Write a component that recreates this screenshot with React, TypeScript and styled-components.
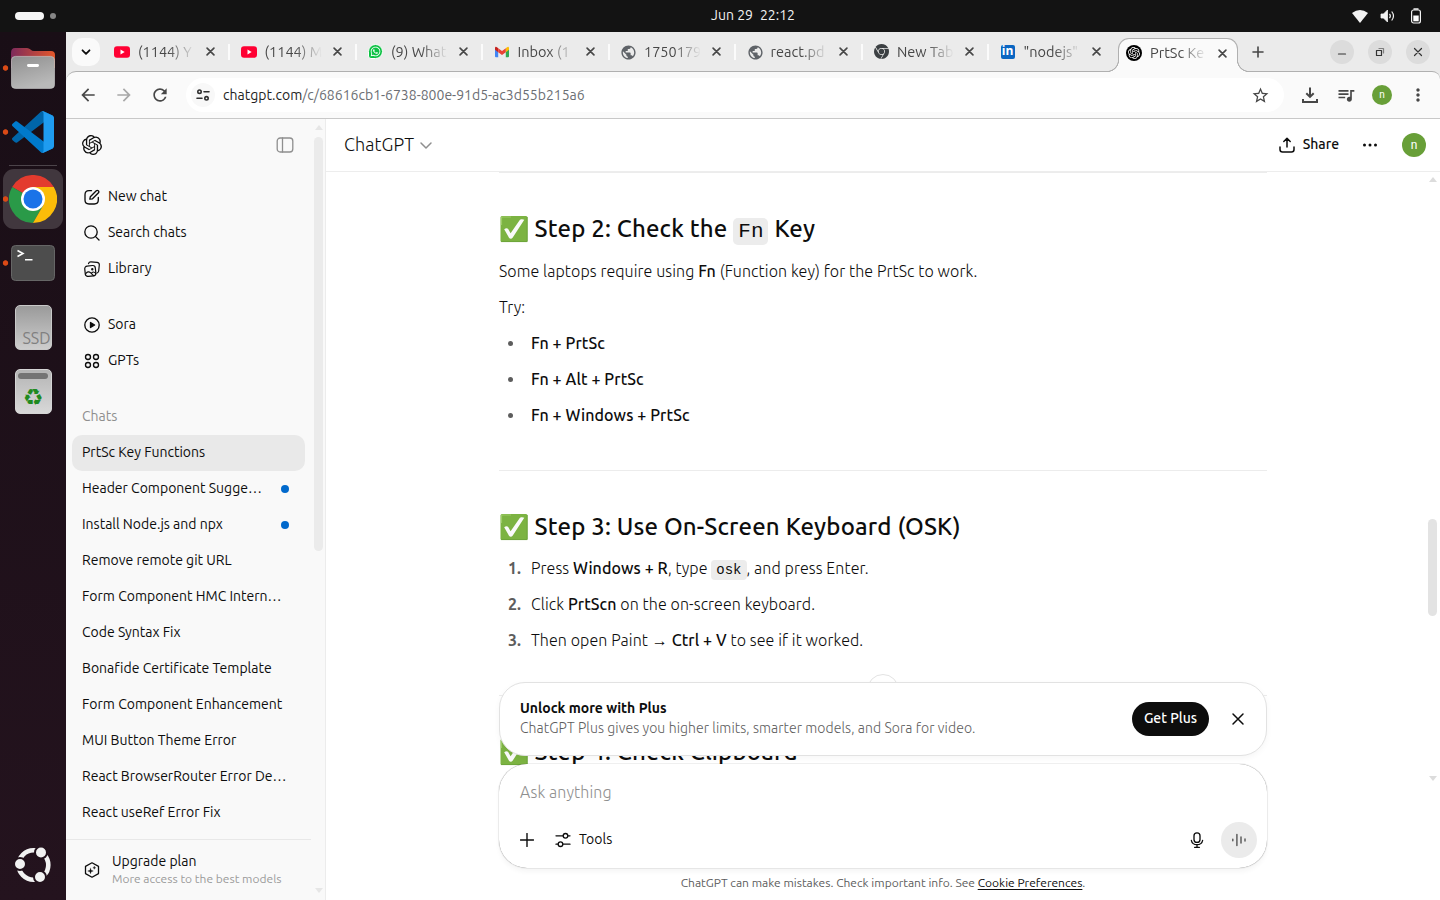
import React from "react";
import styled, { createGlobalStyle, css } from "styled-components";
import {
  MdArrowBack, MdArrowForward, MdRefresh, MdStarBorder, MdQueueMusic, MdMoreVert, MdPublic,
} from "react-icons/md";
import { SiOpenai, SiGooglechrome } from "react-icons/si";
import { FaWhatsapp } from "react-icons/fa";

const Global = createGlobalStyle`
  * { box-sizing: border-box; }
  body {
    margin: 0;
    overflow: hidden;
    font-family: Ubuntu, "Open Sans", "Noto Sans", sans-serif;
    font-variant-ligatures: none;
    font-size: 14px;
    color: #0d0d0d;
  }
  svg { display: block; flex: none; }
`;

/* ---------- text ---------- */

const Label = styled.span<{ $size?: number; $weight?: number; $color?: string; $track?: number; $lift?: number }>`
  font-size: ${(p) => p.$size ?? 14}px;
  font-weight: ${(p) => p.$weight ?? 400};
  color: ${(p) => p.$color ?? "inherit"};
  letter-spacing: ${(p) => p.$track ?? 0}px;
  padding-bottom: ${(p) => p.$lift ?? 2}px;
  line-height: 20px;
  white-space: pre;
`;

/* ---------- desktop shell ---------- */

const Desktop = styled.div`
  width: 1440px;
  height: 900px;
  display: grid;
  grid-template: 32px 868px / 66px 1374px;
  overflow: hidden;
`;

const TopBar = styled.header`
  grid-column: 1 / 3;
  display: grid;
  grid-template-columns: 1fr auto 1fr;
  align-items: center;
  background: #131313;
  color: #f2f2f2;
`;

const Workspaces = styled.div`
  display: flex;
  align-items: center;
  gap: 6px;
  padding-left: 15px;
`;

const WorkspacePill = styled.i<{ $active?: boolean }>`
  width: ${(p) => (p.$active ? 29 : 6)}px;
  height: ${(p) => (p.$active ? 8 : 6)}px;
  border-radius: 4px;
  background: ${(p) => (p.$active ? "#f6f6f6" : "#868686")};
`;

const Clock = styled.div`
  display: flex;
  gap: 7px;
  padding-left: 66px;
`;

const Tray = styled.div`
  display: flex;
  justify-content: flex-end;
  align-items: center;
  gap: 12px;
  padding-right: 16px;
`;

const Dock = styled.nav`
  display: flex;
  flex-direction: column;
  background: linear-gradient(#190e16, #24131e);
`;

const DockItem = styled.div<{ $height: number; $running?: boolean }>`
  height: ${(p) => p.$height}px;
  display: grid;
  grid-template-columns: 3px 60px;
  align-items: center;
  justify-items: center;
  ${(p) =>
    p.$running &&
    css`
      background: radial-gradient(circle at 5.5px 50%, #db4a16 2.3px, transparent 3.1px);
    `}
`;

const DockTile = styled.div<{ $focused?: boolean }>`
  grid-column: 2;
  width: ${(p) => (p.$focused ? 60 : 59)}px;
  display: grid;
  place-items: center;
  border-radius: 11px;
  ${(p) =>
    p.$focused &&
    css`
      height: 60px;
      background: radial-gradient(circle at 2.5px 50%, #db4a16 2.3px, transparent 3.1px), #41373e;
    `}
`;

const DockRule = styled.i`
  width: 48px;
  height: 1px;
  margin: 5px 0 3px 9px;
  background: #4c444a;
`;

const Spacer = styled.div`
  flex: 1;
`;

/* ---------- browser window ---------- */

const Browser = styled.section`
  display: grid;
  grid-template-rows: 39px 48px 781px;
  min-width: 0;
  background: #ebebeb;
`;

const TabStrip = styled.div`
  display: flex;
  align-items: center;
  padding-left: 6px;
`;

const TabSearch = styled.div`
  width: 28px;
  height: 28px;
  margin-right: 4px;
  display: grid;
  place-items: center;
  border-radius: 10px;
  background: #fafafa;
`;

const Tab = styled.div`
  flex: none;
  width: 126.5px;
  height: 28px;
  display: flex;
  align-items: center;
  padding-left: 10px;
  color: #474747;
`;

const Favicon = styled.div`
  width: 16px;
  height: 16px;
  flex: none;
  display: grid;
  place-items: center;
`;

const TabRule = styled.i`
  width: 2px;
  height: 16px;
  flex: none;
  margin-left: 13px;
  background: #fbfbfb;
`;

const ActiveTab = styled.div`
  position: relative;
  z-index: 1;
  flex: none;
  align-self: flex-end;
  width: 120px;
  height: 34px;
  margin: 0 0 -1px 2px;
  padding: 0 0 5px 7px;
  display: flex;
  align-items: center;
  color: #474747;
  background: #fafafa;
  border: 1px solid #b0b0b0;
  border-bottom: 0;
  border-radius: 11px 11px 0 0;

  &::before,
  &::after {
    content: "";
    position: absolute;
    bottom: 0;
    width: 12px;
    height: 12px;
  }
  &::before {
    right: 100%;
    background: radial-gradient(circle at 0 0, #ebebeb 10.6px, #b0b0b0 11.2px 11.8px, #fafafa 12.3px);
  }
  &::after {
    left: 100%;
    background: radial-gradient(circle at 100% 0, #ebebeb 10.6px, #b0b0b0 11.2px 11.8px, #fafafa 12.3px);
  }
`;

const TabTitle = styled(Label)`
  flex: none;
  width: 58px;
  margin: 0 10px 0 8px;
  mask-image: linear-gradient(90deg, #000 52%, transparent 98%);
`;

const NewTab = styled.div`
  margin-left: 14px;
`;

const WindowControls = styled.div`
  margin-left: auto;
  padding-right: 10px;
  display: flex;
  gap: 14px;
`;

const WindowButton = styled.div`
  width: 24px;
  height: 24px;
  display: grid;
  place-items: center;
  border-radius: 50%;
  background: #dcdcdc;
`;

const Toolbar = styled.div`
  display: flex;
  align-items: center;
  padding: 0 12px;
  color: #474747;
  background: #fafafa;
  border: solid #b0b0b0;
  border-width: 1px 0;
  border-bottom-color: #c8c8c8;
  border-radius: 10px 8px 0 0;
`;

const NavButtons = styled.div`
  display: flex;
  gap: 16px;
  margin-right: 16px;
`;

const Omnibox = styled.div`
  flex: 1;
  height: 34px;
  display: flex;
  align-items: center;
  padding: 0 14px 0 5px;
  border-radius: 17px;
  background: #fff;
`;

const SiteChip = styled.div`
  width: 24px;
  height: 24px;
  margin-right: 8px;
  display: grid;
  place-items: center;
  border-radius: 50%;
  background: #f8f8f8;
`;

const ToolbarActions = styled.div`
  display: flex;
  align-items: center;
  gap: 16px;
  margin-left: 16px;
`;

const Avatar = styled.div<{ $size: number }>`
  width: ${(p) => p.$size}px;
  height: ${(p) => p.$size}px;
  display: grid;
  place-items: center;
  border-radius: 50%;
  background: #689f38;
  color: #fff;
  font-family: Roboto, sans-serif;
  font-size: ${(p) => p.$size / 2}px;
  line-height: 1;
  padding-bottom: 1px;
`;

/* ---------- page ---------- */

const Page = styled.main`
  display: grid;
  grid-template-columns: 260px 1114px;
  background: #fff;
`;

const Sidebar = styled.aside`
  display: grid;
  grid-template-columns: 246px 13px;
  background: #f9f9f9;
  border-right: 1px solid #ececec;
`;

const SidebarBody = styled.div`
  display: flex;
  flex-direction: column;
  min-width: 0;
`;

const SidebarHeader = styled.div`
  height: 52px;
  margin-bottom: 8px;
  padding: 0 18px 0 16px;
  display: flex;
  align-items: center;
  justify-content: space-between;
`;

const NavRow = styled.div`
  height: 36px;
  display: flex;
  align-items: center;
  gap: 8px;
  padding-left: 18px;
`;

const NavGroup = styled.div`
  margin-bottom: 20px;
`;

const SectionTitle = styled.div`
  height: 36px;
  padding-left: 16px;
  display: flex;
  align-items: center;
`;

const ChatRow = styled.div<{ $selected?: boolean }>`
  height: 36px;
  width: 233px;
  margin-left: 6px;
  padding: 0 16px 0 10px;
  display: flex;
  align-items: center;
  justify-content: space-between;
  border-radius: 10px;
  background: ${(p) => (p.$selected ? "#e9e9e9" : "transparent")};
`;

const UnreadDot = styled.i`
  width: 8px;
  height: 8px;
  border-radius: 50%;
  background: #0169cc;
`;

const UpgradeRow = styled.div`
  margin-top: auto;
  height: 61px;
  width: 245px;
  padding-left: 18px;
  display: flex;
  align-items: center;
  gap: 12px;
  border-top: 1px solid #e8e8e8;
`;

const UpgradeText = styled.div`
  display: flex;
  flex-direction: column;
  padding-top: 2px;
  span { line-height: 16px; }
`;

const ScrollTrack = styled.div`
  display: flex;
  flex-direction: column;
  align-items: center;
  padding: 6px 0 7px;
`;

const ScrollThumb = styled.i<{ $top: number; $height: number; $color: string }>`
  width: 9px;
  height: ${(p) => p.$height}px;
  margin: ${(p) => p.$top}px 0 auto;
  border-radius: 5px;
  background: ${(p) => p.$color};
`;

const ScrollArrow = styled.i<{ $down?: boolean; $color: string }>`
  border: 4.5px solid transparent;
  border-width: ${(p) => (p.$down ? "5px 4.5px 0" : "0 4.5px 5px")};
  border-top-color: ${(p) => (p.$down ? p.$color : "transparent")};
  border-bottom-color: ${(p) => (p.$down ? "transparent" : p.$color)};
`;

const Chat = styled.section`
  position: relative;
  display: grid;
  grid-template-rows: 53px 728px;
`;

const ChatHeader = styled.div`
  display: flex;
  align-items: center;
  padding: 0 14px 0 18px;
  border-bottom: 1px solid #ededed;
`;

const ShareButton = styled.div`
  margin-left: auto;
  margin-right: 23px;
  display: flex;
  align-items: center;
  gap: 8px;
`;

const MoreButton = styled.div`
  margin-right: 24px;
`;

const ChatScroll = styled.div`
  display: grid;
  grid-template-columns: 173px 768px 1fr 15px;
  overflow: hidden;
`;

const PaneScroll = styled.div`
  height: 614px;
  display: flex;
  flex-direction: column;
  align-items: center;
  padding: 5px 0 5px;
`;

const Message = styled.article`
  grid-column: 2;
  font-size: 16px;
  line-height: 28px;
  font-weight: 300;
  letter-spacing: 0.09px;
`;

const Rule = styled.hr`
  height: 1px;
  margin: 0;
  border: 0;
  background: #ececec;
`;

const Heading = styled.h2<{ $after?: number }>`
  height: 32px;
  margin: 40px 0 ${(p) => p.$after ?? 11}px;
  display: flex;
  align-items: center;
  font-size: 24px;
  font-weight: 500;
  line-height: 32px;
  letter-spacing: 0.16px;
  white-space: pre;
  svg { margin-right: 6.500px; }
`;

const HeadingCode = styled.code`
  width: 35px;
  height: 27px;
  margin: 5px 6px 0;
  display: inline-flex;
  justify-content: center;
  align-items: center;
  border-radius: 5px;
  background: #ececec;
  font: 400 21px/27px "Liberation Mono", monospace;
  letter-spacing: 0;
`;

const Code = styled.code`
  padding: 2px 5px;
  border-radius: 4px;
  background: #ececec;
  font: 500 14px/16px "Liberation Mono", monospace;
  letter-spacing: 0;
`;

const Paragraph = styled.p`
  margin: 0 0 8px;
  white-space: pre;
  b { font-weight: 500; }
`;

const List = styled.ul`
  margin: 0 0 41px;
  padding: 0;
  list-style: none;
`;

const Item = styled.li`
  display: flex;
  height: 28px;
  margin-bottom: 8px;
  &:last-child { margin-bottom: 0; }
  white-space: pre;
  b { font-weight: 500; }
`;

const Bullet = styled.span`
  width: 32px;
  display: flex;
  align-items: center;
  padding-left: 9px;
  &::before {
    content: "";
    width: 5px;
    height: 5px;
    border-radius: 50%;
    background: #5d5d5d;
  }
`;

const Ordinal = styled.span`
  width: 32px;
  padding-left: 9px;
  color: #5d5d5d;
  font-weight: 600;
`;

const ComposerLayer = styled.div`
  position: absolute;
  left: 173px;
  bottom: 0;
  width: 768px;
  display: flex;
  flex-direction: column;
`;

const JumpButton = styled.i`
  width: 32px;
  height: 32px;
  margin: 0 auto -24px;
  border: 1px solid #e3e3e3;
  border-radius: 50%;
  background: #fff;
`;

const Banner = styled.div`
  position: relative;
  height: 74px;
  margin-bottom: 8px;
  padding: 0 21px 0 20px;
  display: flex;
  align-items: center;
  border: 1px solid #e2e2e2;
  border-radius: 26px;
  background: #fff;
  box-shadow: 0 2px 6px rgba(0, 0, 0, 0.04);
`;

const BannerText = styled.div`
  display: flex;
  flex-direction: column;
  padding-bottom: 3px;
`;

const PlusButton = styled.div`
  width: 77px;
  height: 34px;
  margin: 0 22px 0 auto;
  display: grid;
  place-items: center;
  border-radius: 17px;
  background: #0d0d0d;
  color: #fff;
`;

const Composer = styled.div`
  height: 104px;
  padding: 18px 10px 10px 21px;
  display: flex;
  flex-direction: column;
  justify-content: space-between;
  border-radius: 28px;
  background: #fff;
  box-shadow: 0 0 1px rgba(0, 0, 0, 0.62), 0 4px 5px rgba(0, 0, 0, 0.04);
`;

const ComposerActions = styled.div`
  display: flex;
  align-items: center;
`;

const ToolsButton = styled.div`
  margin-left: 21px;
  display: flex;
  align-items: center;
  gap: 8px;
`;

const VoiceButton = styled.div`
  width: 36px;
  height: 36px;
  margin-left: 16px;
  display: grid;
  place-items: center;
  border-radius: 50%;
  background: #ebebeb;
`;

const Disclaimer = styled.div`
  height: 32px;
  display: flex;
  align-items: center;
  justify-content: center;
  u { color: #0d0d0d; text-underline-offset: 2px; }
`;

/* ---------- icons ---------- */

const Line: React.FC<{ size?: number; w?: number; box?: number; color?: string; children: React.ReactNode }> = ({
  size = 16, w = 1.33, box = 16, color = "currentColor", children,
}) => (
  <svg width={size} height={size} viewBox={`0 0 ${box} ${box}`} fill="none" stroke={color} strokeWidth={w} strokeLinecap="round" strokeLinejoin="round">
    {children}
  </svg>
);

const CloseMark = () => (
  <Line size={9} box={10} w={1.8}><path d="M1.200 1.200l7.600 7.600M8.800 1.200l-7.600 7.600" /></Line>
);

const CheckEmoji = () => (
  <svg width="29" height="28" viewBox="0 0 29 28">
    <rect x="1.500" y="1" width="27" height="26" rx="1.500" fill="#7cb342" />
    <path d="M2.500 10V3q0-1 1-1H12" fill="none" stroke="#9ccc65" strokeWidth="1.200" />
    <path d="M2 26.600h26.200V2" fill="none" stroke="#689f38" strokeWidth=".8" />
    <path d="M5.200 14.200c1.400-1 3-1.400 4-.2l2.400 4.200L20.600 5.200c.8-1.200 3-1.300 4.700-.5L13.600 22.800c-.8 1.200-2.700 1.300-3.600 0z" fill="#fafafa" />
  </svg>
);

const FolderIcon = () => (
  <svg width="44" height="41" viewBox="0 0 44 41">
    <defs>
      <linearGradient id="fb"><stop stopColor="#7d2a5b" /><stop offset="1" stopColor="#e4572b" /></linearGradient>
      <linearGradient id="ff" x2="0.4" y2="1"><stop stopColor="#8f8f8f" /><stop offset="1" stopColor="#b9b9b9" /></linearGradient>
    </defs>
    <path d="M0 5q0-5 4-5h12q2 0 3.500 1.500T23 3h17q4 0 4 4v13H0z" fill="url(#fb)" />
    <rect x=".4" y="8.400" width="43.200" height="32" rx="4" fill="url(#ff)" stroke="#c4c4c4" strokeWidth=".7" />
    <rect x="16" y="16" width="12" height="3" rx="1.400" fill="#fff" />
  </svg>
);

const CodeIcon = () => (
  <svg width="42" height="42" viewBox="0 0 100 100">
    <path d="M97 11 76 1C73 0 70 .5 68 2.500L1.500 63.500c-2 1.600-2 4.400 0 6L7 74.500c1.500 1.400 3.700 1.500 5.300.3L92.500 14c2.600-2 6.500-.2 6.500 3.300z" fill="#0065a9" />
    <path d="M97 89 76 99c-3 1-6 .5-8-1.500L1.500 36.500c-2-1.600-2-4.400 0-6L7 25.500c1.500-1.400 3.700-1.500 5.300-.3L92.500 86c2.600 2 6.500.2 6.500-3.300z" fill="#007acc" />
    <path d="M76 99c-3 1-6 .5-8-1.500 2.600 2.600 7 .7 7-3V5.500c0-3.700-4.400-5.600-7-3C70 .5 73 0 76 1l20.500 10c2.100 1 3.500 3.200 3.500 5.600v66.800c0 2.400-1.400 4.600-3.500 5.600z" fill="#1f9cf0" />
  </svg>
);

const ChromeIcon = () => (
  <svg width="48" height="48" viewBox="0 0 48 48">
    <path d="M24 24 3.200 12A24 24 0 0 1 44.800 12z" fill="#e33b2e" />
    <path d="M24 24 3.200 12A24 24 0 0 0 24 48l10.400-18z" fill="#2a9a48" />
    <path d="M24 12H44.800A24 24 0 0 1 24 48l10.400-18z" fill="#fbbc09" />
    <circle cx="24" cy="24" r="12" fill="#fff" />
    <circle cx="24" cy="24" r="9.500" fill="#1a73e8" />
  </svg>
);

const TerminalIcon = () => (
  <svg width="44" height="36" viewBox="0 0 44 36">
    <rect x=".5" y=".5" width="43" height="35" rx="4" fill="#4d4d4d" stroke="#666" />
    <path d="M6.500 5.500 12 8.500l-5.500 3M14 14.800h7.500" fill="none" stroke="#fff" strokeWidth="1.600" />
  </svg>
);

const DriveFace = styled.div`
  width: 37px;
  height: 45px;
  display: flex;
  align-items: flex-end;
  justify-content: flex-end;
  border: 1px solid #c9c9c9;
  border-radius: 5px;
  background: linear-gradient(#9a9a9a, #cdcdcd);
  color: #808080;
`;

const TrashFace = styled.div`
  width: 37px;
  height: 45px;
  padding-top: 3px;
  display: flex;
  flex-direction: column;
  align-items: center;
  gap: 6px;
  border: 1px solid #d5d5d5;
  border-radius: 5px;
  background: linear-gradient(#b5b5b5, #d8d8d8);
  color: #1f8a1f;
  font: 23px/24px "DejaVu Sans", sans-serif;
  &::before {
    content: "";
    width: 30px;
    height: 6px;
    flex: none;
    border-radius: 3px;
    background: #747474;
  }
`;

const UbuntuIcon = () => (
  <svg width="36" height="36" viewBox="0 0 36 36" fill="#f2f2f2">
    <circle cx="18.500" cy="18" r="14.800" fill="none" stroke="#f2f2f2" strokeWidth="4.600" />
    <g stroke="#22121c" strokeWidth="2">
      <circle cx="5" cy="17" r="6" /><circle cx="26" cy="5.500" r="6" /><circle cx="25" cy="30" r="6" />
    </g>
  </svg>
);

const YouTube = () => (
  <svg width="16" height="16" viewBox="0 0 16 16">
    <rect y="2.300" width="16" height="11.400" rx="3" fill="#f03" /><path d="M6.500 5.600v4.800L10.700 8z" fill="#fff" />
  </svg>
);

const WhatsAppMark = styled.div`
  width: 15px;
  height: 15px;
  display: grid;
  place-items: center;
  border-radius: 50% 50% 50% 3px;
  border: 1px solid #fff;
  background: #0cc143;
  color: #fff;
`;

const Gmail = () => (
  <svg width="16" height="16" viewBox="0 0 16 16">
    <path d="M1 5v7.200q0 1 1 1h2.200V7.500z" fill="#4285f4" /><path d="M15 5v7.200q0 1-1 1h-2.200V7.500z" fill="#34a853" />
    <path d="M11.800 4.200 13 3.200q2-1 2 1v1.500l-3.200 2.500z" fill="#fbbc04" /><path d="M4.200 4.200 3 3.200q-2-1-2 1v1.500l3.200 2.500z" fill="#c5221f" />
    <path d="M4.200 4.200 8 7.100l3.800-2.900v4L8 11 4.200 8.200z" fill="#ea4335" />
  </svg>
);

const LinkedInMark = styled.div`
  width: 14px;
  height: 14px;
  display: grid;
  place-items: center;
  border-radius: 2px;
  background: #0a66c2;
  color: #fff;
  font: 700 12px/12px "Open Sans", sans-serif;
  padding-bottom: 1px;
`;

const GptMark = styled.div`
  width: 16px;
  height: 16px;
  display: grid;
  place-items: center;
  border-radius: 50%;
  background: #000;
  color: #fff;
`;

/* ---------- data ---------- */

const tabs = [
  { icon: <YouTube />, title: "(1144) Y" },
  { icon: <YouTube />, title: "(1144) M" },
  { icon: <WhatsAppMark><FaWhatsapp size={11} /></WhatsAppMark>, title: "(9) What" },
  { icon: <Gmail />, title: "Inbox (1" },
  { icon: <MdPublic size={17} color="#5f6368" />, title: "1750179" },
  { icon: <MdPublic size={17} color="#5f6368" />, title: "react.pd" },
  { icon: <SiGooglechrome size={15} color="#3c4043" />, title: "New Tab" },
  { icon: <LinkedInMark>in</LinkedInMark>, title: "\"nodejs\"" },
];

const chats: { title: string; selected?: boolean; unread?: boolean }[] = [
  { title: "PrtSc Key Functions", selected: true },
  { title: "Header Component Sugge…", unread: true },
  { title: "Install Node.js and npx", unread: true },
  { title: "Remove remote git URL" },
  { title: "Form Component HMC Intern…" },
  { title: "Code Syntax Fix" },
  { title: "Bonafide Certificate Template" },
  { title: "Form Component Enhancement" },
  { title: "MUI Button Theme Error" },
  { title: "React BrowserRouter Error De…" },
  { title: "React useRef Error Fix" },
];

/* ---------- app ---------- */

export default function App() {
  return (
    <Desktop>
      <Global />
      <TopBar>
        <Workspaces><WorkspacePill $active /><WorkspacePill /></Workspaces>
        <Clock>
          <Label>Jun 29</Label>
          <Label>22:12</Label>
        </Clock>
        <Tray>
          <svg width="16" height="14" viewBox="0 0 16 14"><path d="M0 4Q8-2 16 4L8 14z" fill="#f2f2f2" /></svg>
          <svg width="16" height="14" viewBox="0 0 16 14" fill="none" stroke="#f2f2f2">
            <path d="M1 5h2.500l4-4v12l-4-4H1z" fill="#f2f2f2" strokeWidth=".8" />
            <path d="M9.500 4.800q1.700 2.200 0 4.400" strokeWidth="1.200" /><path d="M11.700 2.500q3.600 4.500 0 9" strokeWidth="1.200" />
          </svg>
          <svg width="16" height="16" viewBox="0 0 16 16" fill="none" stroke="#f2f2f2" strokeWidth="1.200">
            <rect x="3.600" y="2" width="8.800" height="13" rx="2" /><path d="M5.500 1h5" strokeWidth="1.500" /><path d="M5.300 7.500h5.400v5.800H5.300z" fill="#fff" stroke="none" />
          </svg>
        </Tray>
      </TopBar>

      <Dock>
        <DockItem $height={72} $running><DockTile><FolderIcon /></DockTile></DockItem>
        <DockItem $height={56} $running><DockTile><CodeIcon /></DockTile></DockItem>
        <DockRule />
        <DockItem $height={60}><DockTile $focused><ChromeIcon /></DockTile></DockItem>
        <DockItem $height={68} $running><DockTile><TerminalIcon /></DockTile></DockItem>
        <DockItem $height={60}>
          <DockTile><DriveFace><Label $size={16} $lift={1}>SSD</Label></DriveFace></DockTile>
        </DockItem>
        <DockItem $height={68}>
          <DockTile><TrashFace>♻</TrashFace></DockTile>
        </DockItem>
        <Spacer />
        <DockItem $height={70}><DockTile><UbuntuIcon /></DockTile></DockItem>
      </Dock>

      <Browser>
        <TabStrip>
          <TabSearch><Line size={12} box={12} w={1.8}><path d="M2.500 4.300 6 7.800l3.500-3.500" /></Line></TabSearch>
          {tabs.map((tab, i) => (
            <Tab key={i}>
              <Favicon>{tab.icon}</Favicon>
              <TabTitle $size={14.5} $lift={0}>{tab.title}</TabTitle>
              <CloseMark />
              {i < tabs.length - 1 && <TabRule />}
            </Tab>
          ))}
          <ActiveTab>
            <GptMark><SiOpenai size={12} /></GptMark>
            <TabTitle $size={14.5} $lift={0}>PrtSc Ke</TabTitle>
            <CloseMark />
          </ActiveTab>
          <NewTab><Line size={12} box={12} w={1.6} color="#474747"><path d="M6 1v10M1 6h10" /></Line></NewTab>
          <WindowControls>
            <WindowButton><Line size={12} box={12} w={1.2} color="#333"><path d="M2.500 8h7" /></Line></WindowButton>
            <WindowButton><Line size={12} box={12} w={1.2} color="#333"><path d="M2.500 4.500h5v5h-5z" /><path d="M5 2.500h4.500V7" opacity=".55" /></Line></WindowButton>
            <WindowButton><Line size={12} box={12} w={1.2} color="#333"><path d="M2.500 2.500l7 7M9.500 2.500l-7 7" /></Line></WindowButton>
          </WindowControls>
        </TabStrip>

        <Toolbar>
          <NavButtons>
            <MdArrowBack size={20} />
            <MdArrowForward size={20} color="#a8a8a8" />
            <MdRefresh size={20} />
          </NavButtons>
          <Omnibox>
            <SiteChip>
              <Line size={14} box={14} w={1.6} color="#303030">
                <circle cx="3.500" cy="3.700" r="1.700" /><path d="M8 3.700h5M1 10.300h5" /><circle cx="10.500" cy="10.300" r="1.700" />
              </Line>
            </SiteChip>
            <Label $lift={0} $color="#1f1f1f">chatgpt.com</Label>
            <Label $lift={0} $color="#6b6e73">/c/68616cb1-6738-800e-91d5-ac3d55b215a6</Label>
            <Spacer />
            <MdStarBorder size={19} />
          </Omnibox>
          <ToolbarActions>
            <Line size={20} box={20} w={2}><path d="M10 2.500v9M6.300 8.200 10 11.900l3.700-3.700M3 14v3h14v-3" strokeLinecap="butt" strokeLinejoin="miter" /></Line>
            <MdQueueMusic size={20} />
            <Avatar $size={20}>n</Avatar>
            <MdMoreVert size={20} />
          </ToolbarActions>
        </Toolbar>

        <Page>
          <Sidebar>
            <SidebarBody>
              <SidebarHeader>
                <SiOpenai size={20} />
                <Line size={18} box={18} w={1.3} color="#8f8f8f"><rect x="1.200" y="2" width="15.600" height="14" rx="3" /><path d="M6.500 2v14" /></Line>
              </SidebarHeader>
              <NavGroup>
                <NavRow>
                  <Line><path d="M7.500 1.700H5Q1 1.700 1 5.700V11q0 4 4 4h5.300q4 0 4-4V8.500" /><path d="M5.800 10.200 6.300 7.800 12.300 1.700q1-.8 2 .1t.2 2L8.500 9.800z" /></Line>
                  <Label>New chat</Label>
                </NavRow>
                <NavRow>
                  <Line><circle cx="7" cy="7" r="6.200" /><path d="M11.600 11.600 15 15" /></Line>
                  <Label>Search chats</Label>
                </NavRow>
                <NavRow>
                  <Line w={1.2}><rect x="1" y="4.800" width="10.600" height="10.400" rx="2.600" transform="rotate(-6 6 10)" /><path d="M4.500 2.600Q5 .8 7 .9l6 .5q2.500.3 2.300 2.600l-.6 6q-.3 1.600-1.600 2" /><path d="M1.500 13q2.500-3.500 5-1.400l3 3M8 11.500q1.800-1.300 3.800.8" /><circle cx="8.300" cy="8.300" r=".6" fill="currentColor" /></Line>
                  <Label>Library</Label>
                </NavRow>
              </NavGroup>
              <NavGroup>
                <NavRow>
                  <Line><circle cx="8" cy="8" r="7.200" /><path d="M6.500 5.500v5L10.600 8z" fill="currentColor" /></Line>
                  <Label>Sora</Label>
                </NavRow>
                <NavRow>
                  <Line><circle cx="4" cy="4" r="2.500" /><circle cx="12" cy="4" r="2.500" /><circle cx="4" cy="12" r="2.500" /><circle cx="12" cy="12" r="2.500" /></Line>
                  <Label>GPTs</Label>
                </NavRow>
              </NavGroup>
              <SectionTitle><Label $color="#8f8f8f">Chats</Label></SectionTitle>
              {chats.map((chat) => (
                <ChatRow key={chat.title} $selected={chat.selected}>
                  <Label>{chat.title}</Label>
                  {chat.unread && <UnreadDot />}
                </ChatRow>
              ))}
              <UpgradeRow>
                <Line w={1.3}><path d="M8 .8 14.500 4.400v7.200L8 15.200 1.500 11.600V4.400z" /><path d="M6.500 6.200 7.200 8.300l2.100.7-2.100.7-.7 2.100-.7-2.100L3.700 9l2.100-.7zM10.300 4.300l.4 1.100 1.100.4-1.100.4-.4 1.100-.4-1.100-1.100-.4 1.100-.4z" fill="currentColor" strokeWidth=".3" /></Line>
                <UpgradeText>
                  <Label>Upgrade plan</Label>
                  <Label $size={12} $color="#9b9b9b">More access to the best models</Label>
                </UpgradeText>
              </UpgradeRow>
            </SidebarBody>
            <ScrollTrack>
              <ScrollArrow $color="#e6e6e6" />
              <ScrollThumb $top={7} $height={414} $color="#ebebeb" />
              <ScrollArrow $down $color="#e6e6e6" />
            </ScrollTrack>
          </Sidebar>

          <Chat>
            <ChatHeader>
              <Label $size={18} $weight={300} $track={0.1}>ChatGPT</Label>
              <Line size={24} box={24} w={1.5} color="#8f8f8f"><path d="M7 10l5 5 5-5" /></Line>
              <ShareButton>
                <Line w={1.5}><path d="M8 10V1.500M4.800 4.500 8 1.300l3.200 3.200M1 10v2.500Q1 15 3.500 15h9q2.500 0 2.500-2.500V10" /></Line>
                <Label $weight={500}>Share</Label>
              </ShareButton>
              <MoreButton>
                <Line size={16} w={0}><g fill="#0d0d0d"><circle cx="2.500" cy="8" r="1.500" /><circle cx="8" cy="8" r="1.500" /><circle cx="13.500" cy="8" r="1.500" /></g></Line>
              </MoreButton>
              <Avatar $size={24}>n</Avatar>
            </ChatHeader>

            <ChatScroll>
              <Message>
                <Rule />
                <Heading $after={12}><CheckEmoji />Step 2: Check the<HeadingCode>Fn</HeadingCode>Key</Heading>
                <Paragraph>Some laptops require using <b>Fn</b> (Function key) for the PrtSc to work.</Paragraph>
                <Paragraph>Try:</Paragraph>
                <List>
                  <Item><Bullet /><b>Fn + PrtSc</b></Item>
                  <Item><Bullet /><b>Fn + Alt + PrtSc</b></Item>
                  <Item><Bullet /><b>Fn + Windows + PrtSc</b></Item>
                </List>
                <Rule />
                <Heading><CheckEmoji />Step 3: Use On-Screen Keyboard (OSK)</Heading>
                <List as="ol">
                  <Item><Ordinal>1.</Ordinal><span>Press <b>Windows + R</b>, type <Code>osk</Code>, and press Enter.</span></Item>
                  <Item><Ordinal>2.</Ordinal><span>Click <b>PrtScn</b> on the on-screen keyboard.</span></Item>
                  <Item><Ordinal>3.</Ordinal><span>Then open Paint → <b>Ctrl + V</b> to see if it worked.</span></Item>
                </List>
                <Rule />
                <Heading><CheckEmoji />Step 4: Check Clipboard</Heading>
              </Message>
              <i />
              <PaneScroll>
                <ScrollArrow $color="#dcdcdc" />
                <ScrollThumb $top={337} $height={97} $color="#e3e3e3" />
                <ScrollArrow $down $color="#dcdcdc" />
              </PaneScroll>
            </ChatScroll>

            <ComposerLayer>
              <JumpButton />
              <Banner>
                <BannerText>
                  <Label $weight={600} $lift={0}>Unlock more with Plus</Label>
                  <Label $weight={300} $color="#5d5d5d" $lift={0} $track={0.085}>ChatGPT Plus gives you higher limits, smarter models, and Sora for video.</Label>
                </BannerText>
                <PlusButton><Label $weight={500}>Get Plus</Label></PlusButton>
                <Line size={14} box={14} w={1.5}><path d="M2 2l10 10M12 2 2 12" /></Line>
              </Banner>
              <Composer>
                <Label $size={16} $weight={300} $color="#8f8f8f" $track={0.1}>Ask anything</Label>
                <ComposerActions>
                  <Line size={14} box={14} w={1.4}><path d="M7 .5v13M.5 7h13" /></Line>
                  <ToolsButton>
                    <Line size={16}><path d="M1 3.800h7M13 3.800h2M1 12.200h2M8 12.200h7" /><circle cx="10.500" cy="3.800" r="2.300" /><circle cx="5.500" cy="12.200" r="2.300" /></Line>
                    <Label>Tools</Label>
                  </ToolsButton>
                  <Spacer />
                  <Line size={16}><rect x="5" y=".8" width="6" height="9.600" rx="3" /><path d="M2.400 8.500q.8 4.200 5.600 4.200t5.600-4.200M8 12.700v2.500M5.600 15.300h4.800" /></Line>
                  <VoiceButton><Line size={16} w={1.5} color="#5d5d5d"><path d="M1.800 7.200v1.600M5.900 2.500v11M10 5v6M14 7v2" /></Line></VoiceButton>
                </ComposerActions>
              </Composer>
              <Disclaimer>
                <Label $size={12} $color="#5d5d5d">ChatGPT can make mistakes. Check important info. See <u>Cookie Preferences</u>.</Label>
              </Disclaimer>
            </ComposerLayer>
          </Chat>
        </Page>
      </Browser>
    </Desktop>
  );
}
